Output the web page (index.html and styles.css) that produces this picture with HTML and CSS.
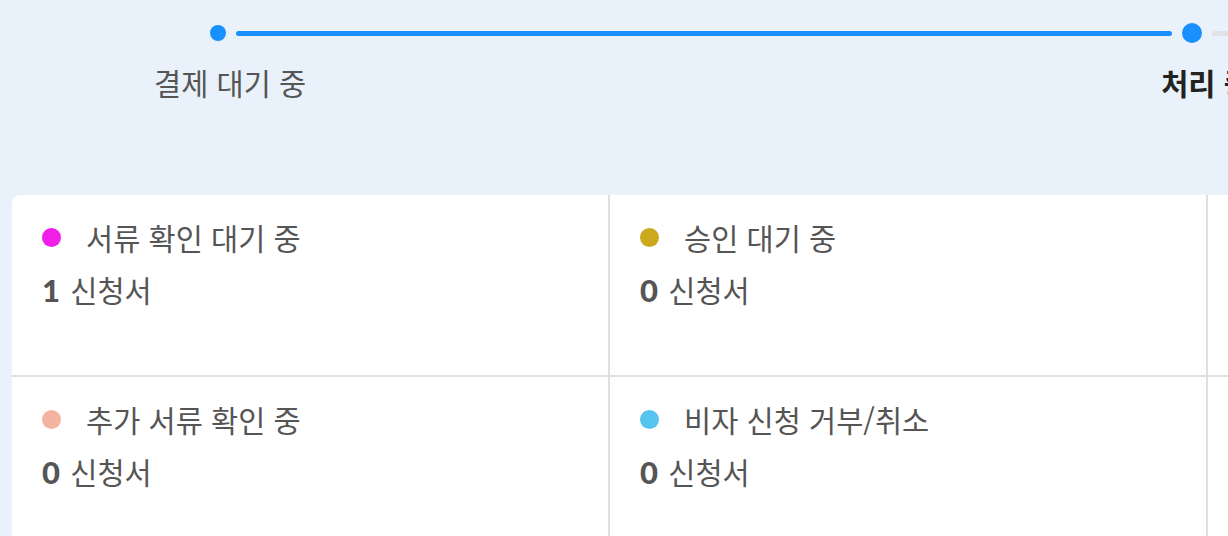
FILE: index.html
```html
<!DOCTYPE html>
<html lang="ko">
<head>
  <meta charset="UTF-8">
  <title>신청 현황</title>
  <link rel="stylesheet" href="styles.css">
</head>
<body>

  <!-- 진행 단계 -->
  <div class="steps">
    <div class="track">
      <span class="dot"></span>
      <span class="line done"></span>
      <span class="dot current"></span>
      <span class="line"></span>
    </div>
    <div class="labels">
      <span class="label">결제 대기 중</span>
      <span class="label active">처리 중</span>
    </div>
  </div>

  <!-- 상태별 신청서 -->
  <div class="board">
    <div class="cell">
      <div class="title"><span class="badge pink"></span>서류 확인 대기 중</div>
      <div class="count"><b>1</b> 신청서</div>
    </div>
    <div class="cell">
      <div class="title"><span class="badge gold"></span>승인 대기 중</div>
      <div class="count"><b>0</b> 신청서</div>
    </div>
    <div class="cell"></div>
    <div class="cell">
      <div class="title"><span class="badge peach"></span>추가 서류 확인 중</div>
      <div class="count"><b>0</b> 신청서</div>
    </div>
    <div class="cell">
      <div class="title"><span class="badge sky"></span>비자 신청 거부/취소</div>
      <div class="count"><b>0</b> 신청서</div>
    </div>
    <div class="cell"></div>
  </div>

</body>
</html>
```

FILE: styles.css
```css
body {
  margin: 0;
  background-color: #e9f2fa;
  color: #555;
  font-family: "Noto Sans CJK KR", "Noto Sans", sans-serif;
  overflow: hidden;
}

.steps {
  height: 195px;
}

.track {
  display: flex;
  align-items: center;
  height: 20px;
  padding: 23px 0 0 210px;
}

.dot {
  flex: none;
  width: 16px;
  height: 16px;
  border-radius: 50%;
  background-color: #1890ff;
}

.dot.current {
  width: 20px;
  height: 20px;
}

.line {
  flex: none;
  width: 400px;
  height: 5px;
  margin: 0 10px;
  border-radius: 3px;
  background-color: #dfe3e8;
}

.line.done {
  width: 936px;
  background-color: #1890ff;
}

.labels {
  display: flex;
  padding: 19px 0 0 154px;
}

.label {
  font-size: 29.5px;
  line-height: 40px;
  white-space: nowrap;
}

.label.active {
  margin-left: 855px;
  color: #222;
  font-weight: 700;
}

.board {
  display: grid;
  grid-template-columns: 598px 598px 598px;
  grid-auto-rows: 182px;
  margin-left: 12px;
  background-color: #fff;
  border-top-left-radius: 8px;
}

.cell {
  padding: 22px 30px 0;
  border-right: 2px solid #dfdfdf;
}

.cell:nth-child(-n+3) {
  border-bottom: 2px solid #dfdfdf;
}

.title {
  display: flex;
  align-items: center;
  font-size: 29.5px;
  line-height: 40px;
}

.badge {
  width: 19px;
  height: 19px;
  margin-right: 25px;
  border-radius: 50%;
}

.pink { background-color: #f01ee6; }
.gold { background-color: #cca81c; }
.peach { background-color: #f5b4a0; }
.sky { background-color: #55c4ee; }

.count {
  margin-top: 12px;
  font-size: 29.5px;
  line-height: 40px;
}

.count b {
  font-family: "Lato", "Noto Sans CJK KR", sans-serif;
  font-size: 31px;
  font-weight: 900;
  margin-right: 2px;
}
```
